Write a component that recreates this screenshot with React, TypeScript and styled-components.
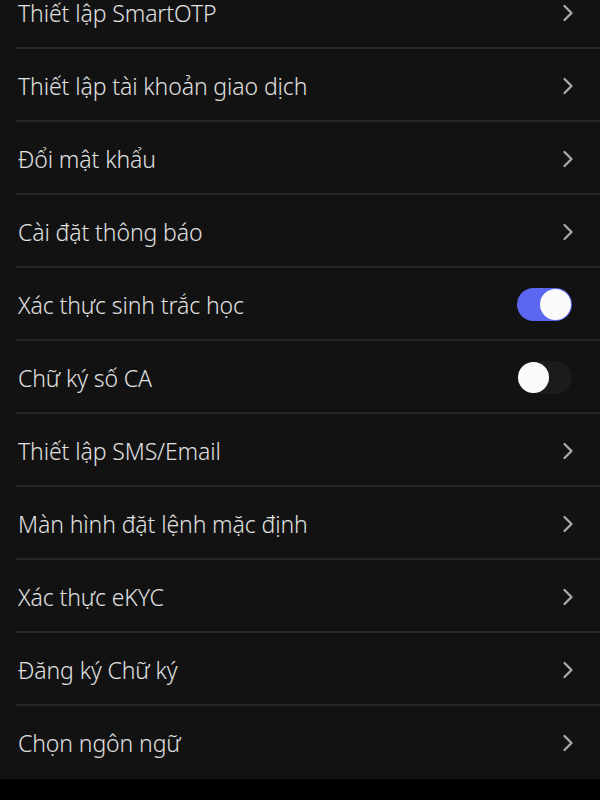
import React from "react";
import styled, { createGlobalStyle } from "styled-components";

const GlobalStyle = createGlobalStyle`
  html, body {
    margin: 0;
    padding: 0;
    background: #000;
  }
  body {
    font-family: "Noto Sans", "Open Sans", sans-serif;
  }
`;

const Screen = styled.div`
  width: 600px;
  height: 800px;
  background: #000;
  overflow: hidden;
`;

const List = styled.ul`
  list-style: none;
  margin: -24px 0 0 0;
  padding: 0;
  background: #121212;
`;

const Row = styled.li<{ $last?: boolean }>`
  height: 73px;
  display: flex;
  align-items: center;
  justify-content: space-between;
  padding: 0 28px 0 18px;
  position: relative;
  box-sizing: border-box;

  &::after {
    content: "";
    display: ${(p) => (p.$last ? "none" : "block")};
    position: absolute;
    left: 16px;
    right: 0;
    bottom: 0;
    height: 2px;
    background: #272727;
  }
`;

const Label = styled.span`
  color: #e0e0e0;
  font-size: 23px;
  font-weight: 330;
  letter-spacing: -0.1px;
`;

const Chevron = styled.svg`
  width: 12px;
  height: 18px;
  margin-right: -2px;
`;

const Track = styled.div<{ $on: boolean }>`
  width: 55px;
  height: 33px;
  border-radius: 17px;
  background: ${(p) => (p.$on ? "#5b67f1" : "#1b1b1b")};
  display: flex;
  align-items: center;
  justify-content: ${(p) => (p.$on ? "flex-end" : "flex-start")};
  padding: 0 1px;
  box-sizing: border-box;
`;

const Knob = styled.div`
  width: 31px;
  height: 31px;
  border-radius: 50%;
  background: #fafafa;
`;

type Item = { label: string; toggle?: boolean };

const items: Item[] = [
  { label: "Thiết lập SmartOTP" },
  { label: "Thiết lập tài khoản giao dịch" },
  { label: "Đổi mật khẩu" },
  { label: "Cài đặt thông báo" },
  { label: "Xác thực sinh trắc học", toggle: true },
  { label: "Chữ ký số CA", toggle: false },
  { label: "Thiết lập SMS/Email" },
  { label: "Màn hình đặt lệnh mặc định" },
  { label: "Xác thực eKYC" },
  { label: "Đăng ký Chữ ký" },
  { label: "Chọn ngôn ngữ" },
];

const App: React.FC = () => {
  return (
    <Screen>
      <GlobalStyle />
      <List>
        {items.map((item, i) => (
          <Row key={item.label} $last={i === items.length - 1}>
            <Label>{item.label}</Label>
            {item.toggle === undefined ? (
              <Chevron viewBox="0 0 12 18">
                <path
                  d="M2.5 2l7 7-7 7"
                  fill="none"
                  stroke="#acacac"
                  strokeWidth="2.2"
                  strokeLinecap="round"
                  strokeLinejoin="round"
                />
              </Chevron>
            ) : (
              <Track $on={item.toggle}>
                <Knob />
              </Track>
            )}
          </Row>
        ))}
      </List>
    </Screen>
  );
};

export default App;
